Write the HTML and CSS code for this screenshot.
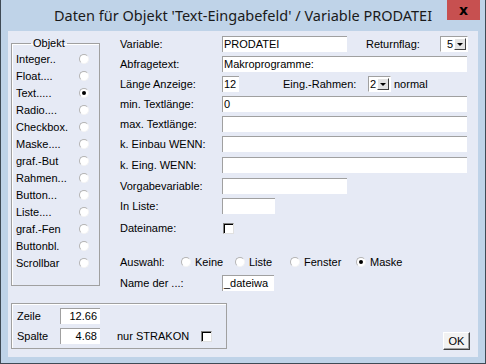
FILE: index.html
```html
<!DOCTYPE html>
<html lang="de">
<head>
    <meta charset="UTF-8">
    <meta name="viewport" content="width=device-width, initial-scale=1.0">
    <title>Daten für Objekt</title>
    <link rel="stylesheet" href="styles.css">
</head>

<body>

    <div class="window">
        <div class="titlebar">
            <span></span>
            <h1 class="title">Daten für Objekt 'Text-Eingabefeld' / Variable PRODATEI</h1>
            <button type="button" class="close">x</button>
        </div>

        <div class="client">
            <div class="top">
                <fieldset class="objekt">
                    <legend>Objekt</legend>
                    <div class="opt"><span>Integer..</span><span class="radio"></span></div>
                    <div class="opt"><span>Float....</span><span class="radio"></span></div>
                    <div class="opt"><span>Text.....</span><span class="radio on"></span></div>
                    <div class="opt"><span>Radio....</span><span class="radio"></span></div>
                    <div class="opt"><span>Checkbox.</span><span class="radio"></span></div>
                    <div class="opt"><span>Maske....</span><span class="radio"></span></div>
                    <div class="opt"><span>graf.-But</span><span class="radio"></span></div>
                    <div class="opt"><span>Rahmen...</span><span class="radio"></span></div>
                    <div class="opt"><span>Button...</span><span class="radio"></span></div>
                    <div class="opt"><span>Liste....</span><span class="radio"></span></div>
                    <div class="opt"><span>graf.-Fen</span><span class="radio"></span></div>
                    <div class="opt"><span>Buttonbl.</span><span class="radio"></span></div>
                    <div class="opt"><span>Scrollbar</span><span class="radio"></span></div>
                </fieldset>

                <div class="form">
                    <div class="row">
                        <label class="lbl">Variable:</label>
                        <div class="field w-mid">PRODATEI</div>
                        <label class="lbl-return">Returnflag:</label>
                        <div class="combo w-ret"><span class="val">5</span><span class="drop"></span></div>
                    </div>
                    <div class="row">
                        <label class="lbl">Abfragetext:</label>
                        <div class="field w-full">Makroprogramme:</div>
                    </div>
                    <div class="row">
                        <label class="lbl">Länge Anzeige:</label>
                        <div class="field w-tiny">12</div>
                        <label class="lbl-rahmen">Eing.-Rahmen:</label>
                        <div class="combo w-rahmen"><span class="val">2</span><span class="drop"></span></div>
                        <span class="after">normal</span>
                    </div>
                    <div class="row">
                        <label class="lbl">min. Textlänge:</label>
                        <div class="field w-full">0</div>
                    </div>
                    <div class="row">
                        <label class="lbl">max. Textlänge:</label>
                        <div class="field w-full"></div>
                    </div>
                    <div class="row">
                        <label class="lbl">k. Einbau WENN:</label>
                        <div class="field w-full"></div>
                    </div>
                    <div class="row tall">
                        <label class="lbl">k. Eing. WENN:</label>
                        <div class="field w-full"></div>
                    </div>
                    <div class="row tall">
                        <label class="lbl">Vorgabevariable:</label>
                        <div class="field w-mid"></div>
                    </div>
                    <div class="row">
                        <label class="lbl">In Liste:</label>
                        <div class="field w-liste"></div>
                    </div>
                    <div class="row check-row">
                        <label class="lbl">Dateiname:</label>
                        <span class="check"></span>
                    </div>
                    <div class="row auswahl">
                        <label class="lbl-auswahl">Auswahl:</label>
                        <span class="choice c1"><span class="radio"></span>Keine</span>
                        <span class="choice c2"><span class="radio"></span>Liste</span>
                        <span class="choice c3"><span class="radio"></span>Fenster</span>
                        <span class="choice"><span class="radio on"></span>Maske</span>
                    </div>
                    <div class="row name-row">
                        <label class="lbl">Name der ...:</label>
                        <div class="field w-name">_dateiwa</div>
                    </div>
                </div>
            </div>

            <div class="bottom">
                <div class="pos">
                    <div class="pos-row">
                        <label class="pos-lbl">Zeile</label>
                        <div class="field num">12.66</div>
                    </div>
                    <div class="pos-row">
                        <label class="pos-lbl">Spalte</label>
                        <div class="field num">4.68</div>
                        <label class="lbl-strakon">nur STRAKON</label>
                        <span class="check"></span>
                    </div>
                </div>
                <button type="button" class="ok">OK</button>
            </div>
        </div>
    </div>

</body>
</html>
```

FILE: styles.css
```css
* {
    margin: 0;
    padding: 0;
    box-sizing: border-box;
}

html,
body {
    width: 486px;
    height: 364px;
    overflow: hidden;
    background: #bfd3e8;
}

body {
    font-family: 'Liberation Sans', Arial, sans-serif;
    font-size: 11px;
    color: #000;
    white-space: nowrap;
}

.window {
    width: 486px;
    height: 364px;
    display: flex;
    flex-direction: column;
    background: #bfd3e8;
    border: 1px solid #3f4a55;
    border-top: none;
    padding: 0 7px 6px 7px;
}

/* title bar */
.titlebar {
    height: 31px;
    flex: none;
    display: grid;
    grid-template-columns: 1fr auto 1fr;
    margin: 0 -7px;
}

.title {
    font-family: 'Noto Sans', 'Open Sans', sans-serif;
    font-weight: normal;
    font-size: 14.5px;
    color: #1a1a1a;
    line-height: 30px;
}

.close {
    justify-self: end;
    align-self: start;
    width: 33px;
    height: 20px;
    margin-right: 5px;
    background: #c75050;
    border: none;
    color: #000;
    font-family: 'DejaVu Sans', sans-serif;
    font-weight: bold;
    font-size: 14px;
    line-height: 18px;
}

/* client area */
.client {
    flex: 1;
    background: #e6eaf5;
    display: flex;
    flex-direction: column;
}

.top {
    height: 272px;
    display: flex;
    align-items: flex-start;
}

.objekt {
    width: 89px;
    height: 249px;
    margin: 6px 0 0 3px;
    padding: 1px 0 0 4px;
    border: 1px solid #a0a0a0;
    box-shadow: inset 1px 1px 0 #fff;
}

.objekt legend {
    margin-left: 15px;
    padding: 0 2px;
    line-height: 12px;
}

.opt {
    display: grid;
    grid-template-columns: 63px 10px;
    align-items: center;
    height: 17px;
}

.radio {
    display: inline-block;
    width: 10px;
    height: 10px;
    border-radius: 50%;
    background: #fff;
    border: 1px solid;
    border-color: #b4b4b4 #f4f4f4 #f4f4f4 #b4b4b4;
    position: relative;
}

.radio.on::after {
    content: '';
    position: absolute;
    left: 2px;
    top: 2px;
    width: 4px;
    height: 4px;
    border-radius: 50%;
    background: #000;
}

/* right form */
.form {
    margin: 3px 0 0 20px;
    width: 358px;
}

.row {
    display: flex;
    align-items: center;
    height: 20px;
}

.row.tall {
    height: 21px;
}

.row.check-row {
    height: 24px;
}

.row.auswahl {
    margin-top: 12px;
}

.row.name-row {
    margin-top: 1px;
}

.lbl {
    width: 102px;
    flex: none;
}

.field {
    height: 16px;
    background: #fff;
    border-top: 1px solid #a0a0a0;
    border-left: 1px solid #a0a0a0;
    padding-left: 1px;
    line-height: 15px;
    overflow: hidden;
    flex: none;
}

.w-full { width: 245px; }
.w-mid { width: 125px; }
.w-tiny { width: 17px; }
.w-liste { width: 53px; }
.w-name { width: 52px; }

.lbl-return {
    margin-left: 19px;
    width: 74px;
    flex: none;
}

.lbl-rahmen {
    margin-left: 44px;
    width: 85px;
    flex: none;
}

.after {
    margin-left: 3px;
}

.combo {
    height: 16px;
    display: flex;
    align-items: center;
    justify-content: space-between;
    background: #fff;
    border: 1px solid;
    border-color: #a0a0a0 #fff #fff #a0a0a0;
    padding: 0 1px 0 1px;
    flex: none;
}

.w-ret { width: 28px; padding-left: 6px; }
.w-rahmen { width: 23px; }

.drop {
    width: 12px;
    height: 12px;
    background: #e4e4e4;
    border: 1px solid;
    border-color: #fff #404040 #404040 #fff;
    display: flex;
    align-items: center;
    justify-content: center;
}

.drop::after {
    content: '';
    border-left: 3px solid transparent;
    border-right: 3px solid transparent;
    border-top: 3px solid #000;
}

.check {
    display: inline-block;
    width: 11px;
    height: 11px;
    background: #fff;
    border: 1px solid;
    border-color: #808080 #e0e0e0 #e0e0e0 #808080;
    box-shadow: inset 1px 1px 0 #000;
    flex: none;
}

.check-row .check {
    margin-left: 1px;
}

.lbl-auswahl {
    width: 61px;
}

.choice {
    display: inline-flex;
    align-items: center;
    gap: 4px;
}

.c1 { width: 54px; }
.c2 { width: 55px; }
.c3 { width: 66px; }

/* bottom */
.bottom {
    flex: 1;
    display: flex;
    align-items: flex-start;
}

.pos {
    width: 216px;
    height: 46px;
    margin-left: 3px;
    padding: 2px 0 0 5px;
    border: 1px solid #a0a0a0;
    box-shadow: inset 1px 1px 0 #fff;
}

.pos-row {
    display: flex;
    align-items: center;
    height: 20px;
}

.pos-lbl {
    width: 43px;
}

.field.num {
    width: 40px;
    text-align: right;
    padding-right: 3px;
}

.lbl-strakon {
    margin-left: 17px;
    width: 84px;
}

.ok {
    margin: 29px 8px 0 auto;
    width: 27px;
    height: 18px;
    background: #f2f2f2;
    border: 1px solid;
    border-color: #fff #404040 #404040 #fff;
    box-shadow: inset -1px -1px 0 #a0a0a0;
    font-family: 'Liberation Sans', Arial, sans-serif;
    font-size: 11px;
    color: #000;
}
```
